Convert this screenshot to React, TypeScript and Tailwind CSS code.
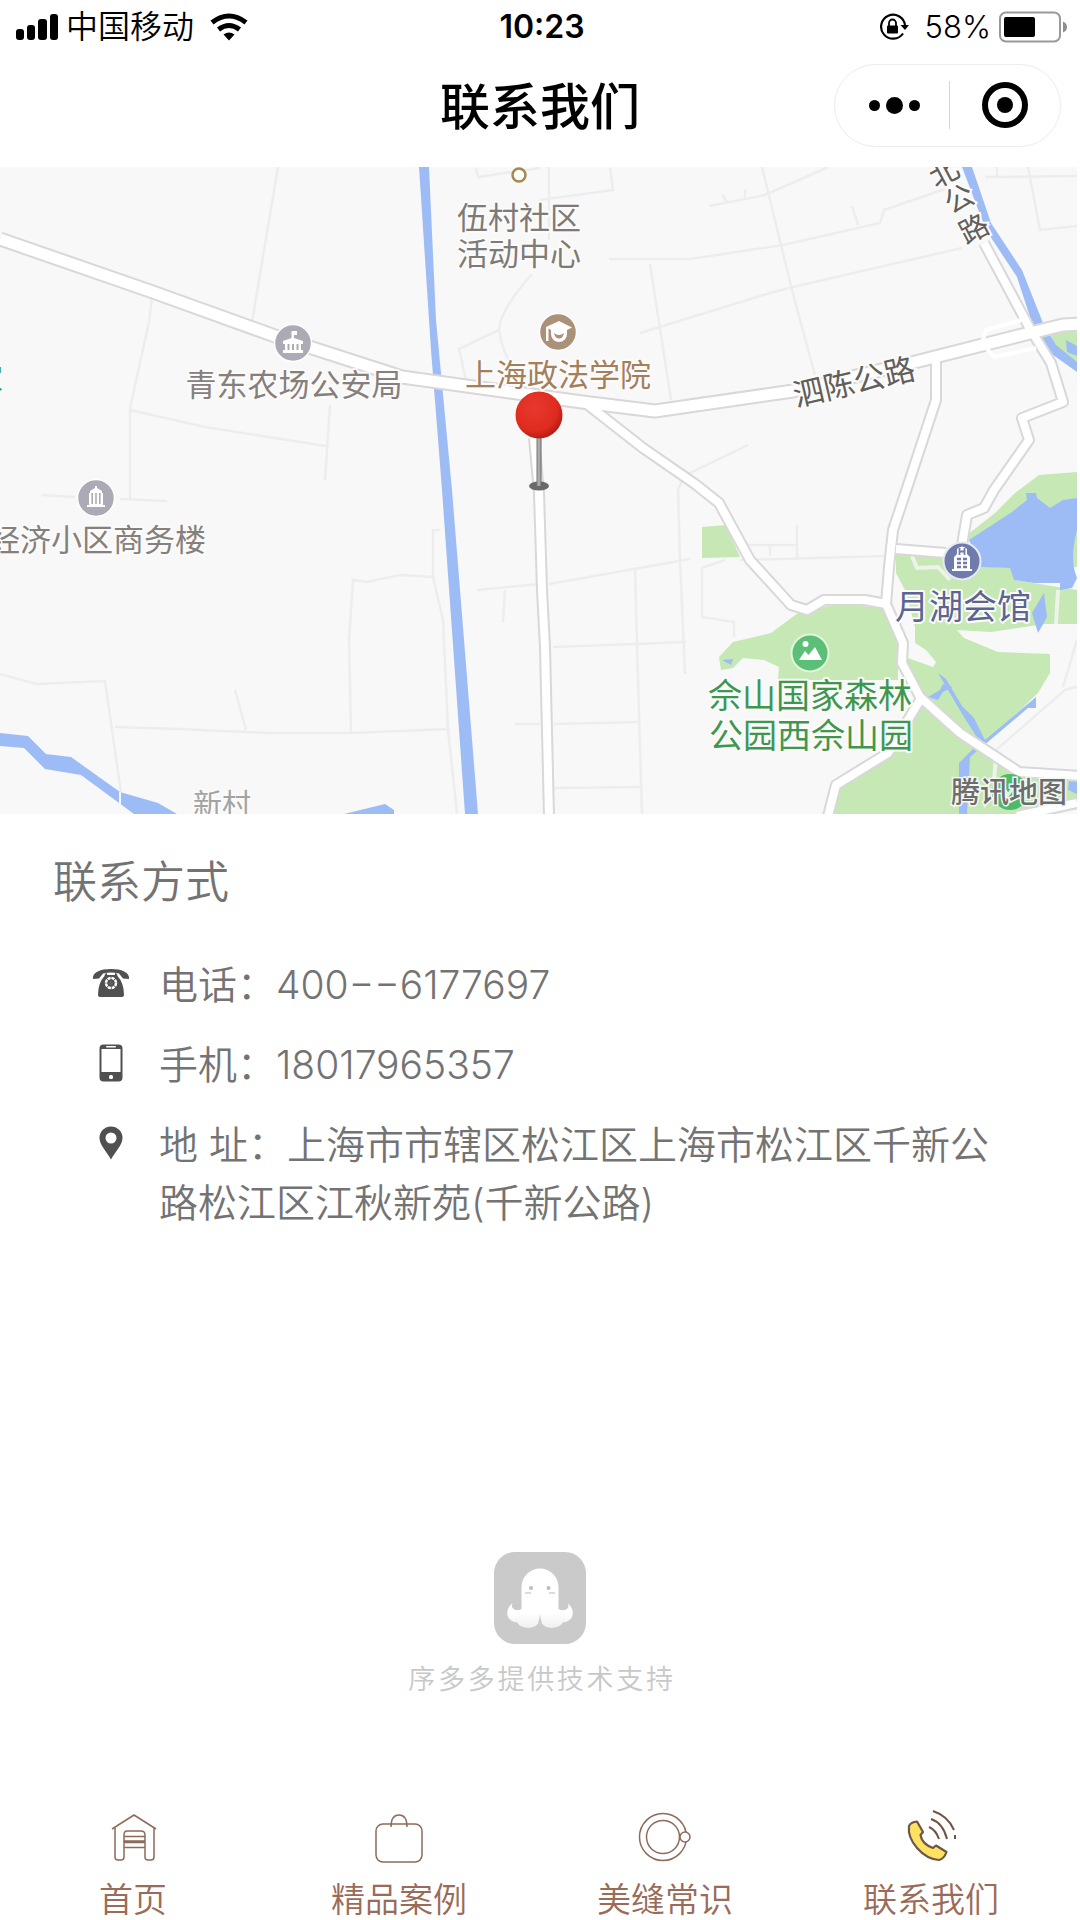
import { useState } from 'react'

const roads = [
    'M0 239 L150 291 L275 336 L402 377 L510 392 L582 402 L655 411 L793 391 L915 362 L1034 332 L1063 325 L1080 324',
    'M936 360 V400 L908 485 L893 530 L889 567 L886 604',
    'M984 243 L1029 327 L1051 363 L1063 402 L1022 418 L1029 440 L994 490 L984 508 L967 515 L962 545',
    'M588 405 L643 448 L695 484 L719 503 L750 560 L791 605 L807 610 L824 600 H865 L886 604 L903 643 L902 663 L920 697 L960 733 L1019 772 L1080 776',
    'M920 700 L908 720 L888 753 L836 785 L828 816',
    'M896 549 L946 553',
    'M534 438 L539 493 L542 590 L545 647 L549 816',
    'M1077 803 L1017 816',
]

const lanes = [
    'M278 167 L252 322', 'M152 298 L149 322 L130 408 V500', 'M130 410 L205 427 L326 446 M330 405 L325 480',
    'M42 495 L75 497 M120 499 L167 501', 'M0 674 L36 684 L105 681 L122 800 M115 727 L180 729 L270 733 H350 L450 729',
    'M235 690 L246 730', 'M351 732 L349 640 L353 580 L367 582 L400 575 L433 577 V530 H440 M433 577 L443 620 L448 730 L457 814',
    'M476 168 L478 177 L540 168 M549 167 V240 M540 200 L613 190 L610 168',
    'M532 274 Q500 310 499 330 L459 349 L466 380 M499 330 Q502 350 510 362',
    'M609 259 H690 L783 245 L880 223 L884 210 L945 189 M762 167 L792 290 L815 375',
    'M709 206 L765 195 L828 167 M722 195 L727 202 M745 189 V198',
    'M640 333 L770 293 L793 287 L962 248 M650 264 L671 400', 'M852 206 L858 225',
    'M985 177 L1077 176 M1028 167 L1040 230 L1077 226 M997 167 V177',
    'M748 445 L684 476 L678 490 L680 560 L685 674', 'M549 584 L634 569 L690 559 M635 570 L637 645 L642 814',
    'M553 647 L636 644 L686 642 M554 724 L640 722 M554 788 L641 787',
    'M477 590 L540 584 M505 590 L503 622 M515 724 H540', 'M748 545 H797 M797 525 V560 M770 546 V556 M740 560 L886 556',
    'M725 560 L702 568 V617 L734 622 V637', 'M988 757 L1065 690 L1077 687 M1063 687 L1077 640',
]

const labels = [
    { text: '青东农场公安局', x: 294, y: 396, size: 31, fill: '#85807d', anchor: 'middle' },
    { text: '伍村社区', x: 519, y: 229, size: 31, fill: '#7d7a77', anchor: 'middle' },
    { text: '活动中心', x: 519, y: 265, size: 31, fill: '#7d7a77', anchor: 'middle' },
    { text: '上海政法学院', x: 558, y: 386, size: 31, fill: '#a37f5c', anchor: 'middle' },
    { text: '经济小区商务楼', x: 206, y: 551, size: 31, fill: '#85807d', anchor: 'end' },
    { text: '新村', x: 222, y: 815, size: 29, fill: '#a3a3a3', anchor: 'middle' },
    { text: '月湖会馆', x: 963, y: 619, size: 34, fill: '#5c6491', anchor: 'middle' },
    { text: '佘山国家森林', x: 810, y: 708, size: 34, fill: '#3f974f', anchor: 'middle' },
    { text: '公园西佘山园', x: 811, y: 748, size: 34, fill: '#3f974f', anchor: 'middle' },
    { text: '家', x: 3, y: 389, size: 30, fill: '#3f974f', anchor: 'end' },
] as const

function MapView() {
    return (
        <svg viewBox="0 167 1077 647" className="block w-full font-[Noto_Sans_CJK_SC,sans-serif]" role="img" aria-label="地图">
            <defs>
                <radialGradient id="pin" cx="0.4" cy="0.35" r="0.65">
                    <stop offset="0" stopColor="#e8392e" />
                    <stop offset="0.75" stopColor="#df2b20" />
                    <stop offset="1" stopColor="#b91d14" />
                </radialGradient>
                <linearGradient id="stem">
                    <stop offset="0" stopColor="#777" />
                    <stop offset="0.5" stopColor="#bbb" />
                    <stop offset="1" stopColor="#666" />
                </linearGradient>
            </defs>
            <rect y="167" width="1077" height="647" fill="#f8f8f8" />
            {lanes.map((d) => (
                <path key={d} d={d} fill="none" stroke="#ededed" strokeWidth="2.5" />
            ))}

            {/* parks */}
            <g fill="#c5e8b5">
                <path d="M1077 472 L1039 475 L1015 493 L995 513 L967 535 L981 567 H1077 Z" />
                <path d="M896 555 L950 556 L981 566 L1010 568 L1015 580 L1077 590 V624 H1045 L991 632 L957 630 L964 638 L998 652 L1050 654 V673 L1038 693 L988 740 L970 757 L922 702 L905 657 L933 667 L936 662 L926 650 L915 643 V627 L905 590 L896 573 Z" />
                <path d="M702 527 L726 525 L740 557 L702 558 Z" />
                <path d="M798 613 L833 605 L884 607 L898 640 V680 H778 L779 667 L764 660 L743 658 L733 668 L721 670 L719 657 L733 642 L771 633 Z" />
                <path d="M922 703 L988 757 L1019 776 L1077 781 V803 L1017 814 H834 L838 789 L890 756 L912 722 Z" />
                <path d="M1050 333 L1077 330 V362 L1057 350 Z" />
            </g>
            {/* water */}
            <g fill="#9dbcf6">
                <path d="M419 167 H429 L436 320 L452 490 L478 814 H465 L442 490 L431 350 Z" />
                <path d="M0 733 L28 736 L46 754 L71 757 L120 792 L158 803 L177 814 H134 L81 775 L45 769 L24 748 L0 746 Z" />
                <path d="M344 814 L385 804 L394 810 V814 Z" />
                <path d="M962 167 H972 L991 223 L1022 270 L1043 323 L1056 345 L1077 362 V372 L1046 350 L1032 323 L1017 277 L986 230 Z" />
                <path d="M1066 340 L1077 346 V356 L1067 352 Z" />
                <path d="M1026 493 L1036 493 L1037 498 L1050 508 L1063 500 L1077 498 V530 Q1069 560 1077 578 L1072 588 L1060 590 V583 L1034 583 L1014 580 L1010 568 L981 567 L969 540 L1012 512 L1027 500 Z" />
                <path d="M1044 593 L1032 613 L1038 633 L1047 617 Z" />
                <path d="M938 673 L946 679 L962 706 L974 718 L985 740 L1036 697 V708 H1028 L970 757 L967 814 H959 V763 L980 742 L964 717 Z" />
                <path d="M928 697 L940 690 L943 684 L953 687 L943 692 L938 700 Z" />
                <path d="M722 660 L733 659 L731 665 Z" />
                <path d="M1069 781 H1077 V794 L1068 790 Z" />
            </g>
            <path d="M120 792 L120 806" stroke="#f8f8f8" strokeWidth="2" />
            <path d="M912 556 L917 568 L938 567 L950 580 M1058 590 L1056 624 M996 755 L994 782" fill="none" stroke="#eef3ea" strokeWidth="4" />

            <g fill="none" stroke="#d9d7d9" strokeLinejoin="round">
                {roads.map((d, i) => (
                    <path key={d} d={d} strokeWidth={i === 0 ? 15 : 12} />
                ))}
            </g>
            <g fill="none" stroke="#fff" strokeLinejoin="round">
                {roads.map((d, i) => (
                    <path key={d} d={d} strokeWidth={i === 0 ? 11 : 8} />
                ))}
                <path d="M1022 320 L986 330 L982 343 L994 357 L1036 348" strokeWidth="4" />
            </g>

            {labels.map((l) => (
                <text
                    key={l.text}
                    x={l.x}
                    y={l.y}
                    fontSize={l.size}
                    fill={l.fill}
                    textAnchor={l.anchor}
                    stroke="#fbfbf9"
                    strokeWidth="4"
                    paintOrder="stroke"
                    strokeLinejoin="round"
                >
                    {l.text}
                </text>
            ))}
            <g fill="#625e5b" stroke="#fbfbf9" strokeWidth="4" paintOrder="stroke" textAnchor="middle">
                <text transform="translate(854 382) rotate(-13)" y="11" fontSize="31">泗陈公路</text>
                <g fontSize="29">
                    <text transform="translate(944 173) rotate(-28)" y="10">北</text>
                    <text transform="translate(959 199) rotate(-28)" y="10">公</text>
                    <text transform="translate(974 229) rotate(-28)" y="10">路</text>
                </g>
            </g>

            <circle cx="519" cy="175" r="6.5" fill="#fff" stroke="#a18a4e" strokeWidth="2.5" />
            {/* police station */}
            <g transform="translate(293 343)">
                <circle r="18.5" fill="#acabb5" stroke="#fff" strokeWidth="1.5" />
                <path d="M-1.5 -12 H4 V-8 H1 V-5 L10 -2 V1 H8 V7 H10 V10 H-10 V7 H-8 V1 H-10 V-2 L-1.5 -5 Z" fill="#fff" />
                <path d="M-4.5 1 V7 M0 1 V7 M4.5 1 V7" stroke="#acabb5" strokeWidth="2" />
            </g>
            {/* office */}
            <g transform="translate(96 498)">
                <circle r="18.5" fill="#acabb5" stroke="#fff" strokeWidth="1.5" />
                <path d="M-1 -12 H1 V-10 L6 -7 V-5 H7 V7 H9 V9 H-9 V7 H-7 V-5 H-6 V-7 L-1 -10 Z" fill="#fff" />
                <path d="M-3.8 -5 V6 M0 -5 V6 M3.8 -5 V6" stroke="#acabb5" strokeWidth="1.6" />
            </g>
            {/* school */}
            <g transform="translate(558 332)">
                <circle r="18.5" fill="#ac9179" stroke="#fff" strokeWidth="1.5" />
                <path d="M1 -11 L14 -4.5 L9 -2 V2 A8 8 0 0 1 -7 2 V-2 L-9.5 -3.5 V9 H-12 V-5 Z" fill="#fff" />
                <path d="M-4 1 Q1 5 6 1 Q5 6.5 1 6.5 Q-3 6.5 -4 1 Z" fill="#ac9179" />
            </g>
            {/* hotel */}
            <g transform="translate(962 561)">
                <circle r="18.5" fill="#6f7bad" stroke="#e6eaf2" strokeWidth="2" />
                <path d="M-10 10 V8 H-8 V-4 L-5 -7 V-12 Q0 -17 5 -12 V-7 L8 -4 V8 H10 V10 Z" fill="#fff" />
                <path d="M-2.5 -13 V-6 M2.5 -13 V-6 M-2.5 -9.5 H2.5" stroke="#6f7bad" strokeWidth="1.8" fill="none" />
                <path d="M-5 -2 H-1 M1 -2 H5 M-5 2 H-1 M1 2 H5 M-5 6 H-1 M1 6 H5" stroke="#6f7bad" strokeWidth="2.4" />
            </g>
            {/* forest park */}
            <g transform="translate(810 653)">
                <circle r="18.5" fill="#5cbf78" stroke="#e2f4d9" strokeWidth="2" />
                <circle cx="-4.5" cy="-9" r="3" fill="#fff" />
                <path d="M-11 7 L-5 -2 L-1.5 2 L5 -6 L12 7 Z" fill="#fff" />
            </g>
            <circle cx="1010" cy="792" r="18" fill="#4dba6b" />
            <path d="M1002 785 L1008 795 L1016 784" stroke="#e2f4d9" strokeWidth="3" fill="none" />
            <text x="1009" y="803" fontSize="29" fontWeight="500" fill="#6d6d6d" stroke="#f4f8f2" strokeWidth="3" paintOrder="stroke" textAnchor="middle">
                腾讯地图
            </text>

            {/* location pin */}
            <ellipse cx="539" cy="486" rx="10" ry="4.5" fill="#6a6a6a" />
            <rect x="536.5" y="430" width="5" height="56" fill="url(#stem)" />
            <circle cx="539" cy="415" r="23.5" fill="url(#pin)" />
        </svg>
    )
}

function StatusBar() {
    return (
        <div className="grid h-[54px] grid-cols-3 items-center pl-4 pr-3 text-[32px] leading-[40px]">
            <div className="flex items-center gap-2">
                <svg width="42" height="28" viewBox="0 0 42 28" aria-hidden="true">
                    <rect x="0" y="16" width="8" height="11" rx="3" />
                    <rect x="11" y="12" width="8" height="15" rx="3" />
                    <rect x="22" y="6" width="9" height="21" rx="3" />
                    <rect x="34" y="1" width="8" height="26" rx="3" />
                </svg>
                <span className="font-[350]">中国移动</span>
                <svg className="ml-2" width="38" height="28" viewBox="0 0 38 28" aria-hidden="true">
                    <g fill="none" stroke="#000" strokeWidth="5">
                        <path d="M2 9.5 Q19 -3.5 36 9.5" />
                        <path d="M8.5 16.5 Q19 8.5 29.5 16.5" />
                    </g>
                    <path d="M13.5 21.5 Q19 17.5 24.5 21.5 L19 27.5 Z" />
                </svg>
            </div>
            <span className="text-center font-semibold">10:23</span>
            <div className="flex items-center justify-end gap-2">
                <svg className="mr-2" width="30" height="30" viewBox="0 0 30 30" aria-hidden="true">
                    <path d="M24 21.5 A12 12 0 1 1 26 13" fill="none" stroke="#000" strokeWidth="2.2" />
                    <path d="M21.5 13 H30 L26 18 Z" />
                    <rect x="8" y="13.5" width="11" height="8" rx="1" />
                    <path d="M10 14 V11 A3.5 3.5 0 0 1 17 11 V14" fill="none" stroke="#000" strokeWidth="1.8" />
                </svg>
                <span className="text-[31px] font-[350]">58%</span>
                <svg width="69" height="32" viewBox="0 0 69 32" aria-hidden="true">
                    <rect x="1" y="1.5" width="60" height="29" rx="6" fill="#fff" stroke="#999" strokeWidth="2" />
                    <rect x="5" y="6" width="31" height="20" rx="2" />
                    <path d="M64 10.5 Q68 12 68 16 Q68 20 64 21.5 Z" fill="#8f8f8f" />
                </svg>
            </div>
        </div>
    )
}

function TitleBar() {
    return (
        <div className="grid grid-cols-3 items-center pb-5 pt-[9px]">
            <h1 className="col-start-2 pt-1 text-center text-[50px] font-medium leading-[80px]">联系我们</h1>
            <div className="mr-[19px] flex h-[83px] w-[227px] items-center justify-self-end rounded-full border border-[#ececec]">
                <button aria-label="更多" className="flex h-12 flex-1 items-center justify-center gap-[6px] border-r border-[#d4d4d4] pl-1">
                    <span className="size-[11px] rounded-full bg-black" />
                    <span className="size-[17px] rounded-full bg-black" />
                    <span className="size-[11px] rounded-full bg-black" />
                </button>
                <button aria-label="关闭" className="flex h-12 flex-1 items-center justify-center">
                    <span className="flex size-[46px] items-center justify-center rounded-full border-[6px] border-black">
                        <span className="size-4 rounded-full bg-black" />
                    </span>
                </button>
            </div>
        </div>
    )
}

const PhoneIcon = () => (
    <svg width="38" height="30" viewBox="0 0 38 30" fill="#505050">
        <path d="M1 11 C0 4 9 1 19 1 S38 4 37 11 L31 10.5 L27 5.5 Q19 3.5 11 5.5 L7 10.5 Z" />
        <path d="M12.5 8 Q13 5 15 5 V7 H23 V5 Q25 5 25.5 8 Q32 15 32 27 Q32 29 30 29 H8 Q6 29 6 27 Q6 15 12.5 8 Z" />
        <circle cx="19" cy="15" r="5" fill="none" stroke="#fff" strokeWidth="2.5" strokeDasharray="3.1 0.8" />
        <circle cx="19" cy="15" r="2" fill="#606060" />
    </svg>
)

const MobileIcon = () => (
    <svg width="24" height="38" viewBox="0 0 24 38">
        <rect x="0.5" y="0.5" width="23" height="37" rx="4" fill="#505050" />
        <rect x="2.5" y="5" width="19" height="23" fill="#fff" />
        <rect x="7" y="2" width="10" height="1.5" rx="0.7" fill="#fff" />
        <rect x="10" y="31" width="4" height="4" rx="1.5" fill="#fff" />
    </svg>
)

const PlaceIcon = () => (
    <svg width="24" height="34" viewBox="0 0 24 34">
        <path d="M12 0.5 A11.5 11.5 0 0 1 23.5 12 C23.5 19 16 26 12 33.5 C8 26 0.5 19 0.5 12 A11.5 11.5 0 0 1 12 0.5 Z M12 6.5 A5.5 5.5 0 1 0 12 17.5 A5.5 5.5 0 1 0 12 6.5 Z" fill="#505050" fillRule="evenodd" />
    </svg>
)

const contacts = [
    { icon: <PhoneIcon />, text: '电话：400−−6177697' },
    { icon: <MobileIcon />, text: '手机：18017965357' },
    { icon: <PlaceIcon />, text: '地 址：上海市市辖区松江区上海市松江区千新公路松江区江秋新苑(千新公路)' },
]

const tabs = [
    {
        name: '首页',
        icon: (
            <path d="M5 17 L27 3 L49 17 M8 16 V45 Q8 48 11 48 H14 Q17 48 17 45 V23 Q17 19 20 19 H34 Q38 19 38 23 V45 Q38 48 41 48 H44 Q47 48 47 45 V16 M17 24.5 H38 M17 29 H38 M17 30.5 H38 M17 35.5 H38" />
        ),
    },
    {
        name: '精品案例',
        icon: (
            <>
                <rect x="3" y="12" width="46" height="38" rx="7" />
                <path d="M18 15 Q18 3 26 3 T34 15" />
            </>
        ),
    },
    {
        name: '美缝常识',
        icon: (
            <>
                <circle cx="24" cy="25" r="23.5" />
                <circle cx="24" cy="25" r="16.5" />
                <circle cx="46" cy="25" r="5" fill="#fff" />
            </>
        ),
    },
    {
        name: '联系我们',
        icon: (
            <>
                <path d="M4 14 Q6 10 12 9.5 L18 20 L15.5 23 Q17 32 28 36 L31 33.5 L41.5 40 Q39 47 34 48 C18 47 2 29 4 14 Z" fill="#fbe262" stroke="#6f5546" strokeWidth="2.2" />
                <path d="M24 15 Q31 18 34 27 M26 7 Q38 11 42 27 M28 -1 Q43 4 49 18 M50 23 V27" stroke="#6f5546" strokeWidth="2" />
            </>
        ),
    },
]

export default function App() {
    const [active, setActive] = useState('联系我们')

    return (
        <div className="flex min-h-screen flex-col bg-white font-[Inter,Noto_Sans_CJK_SC,sans-serif] text-black">
            <header>
                <StatusBar />
                <TitleBar />
            </header>

            <main className="flex flex-1 flex-col">
                <div className="mr-[3px]">
                    <MapView />
                </div>

                <section className="px-[53px] pt-9 text-[#737373]">
                    <h2 className="text-[44px] font-[350] leading-[64px]">联系方式</h2>
                    <ul className="mt-[42px] space-y-[22px] pl-[38px]">
                        {contacts.map((c) => (
                            <li key={c.text} className="flex gap-7 text-[39px] font-[350] leading-[58px]">
                                <span className="flex h-[54px] w-[40px] shrink-0 items-center justify-center">{c.icon}</span>
                                <p>{c.text}</p>
                            </li>
                        ))}
                    </ul>
                </section>

                <div className="mt-auto flex flex-col items-center gap-4 pb-28">
                    <svg width="92" height="92" viewBox="0 0 92 92" aria-hidden="true">
                        <defs>
                            <linearGradient id="legs" x1="0" y1="0" x2="0" y2="1">
                                <stop offset="0.75" stopColor="#fff" />
                                <stop offset="1" stopColor="#efefef" />
                            </linearGradient>
                        </defs>
                        <rect width="92" height="92" rx="21" fill="#cacaca" />
                        <path
                            d="M27.5 35 A18.5 18.5 0 0 1 64.5 35 V57 Q70 60 74 56 Q75 53 73.5 51 C80 56 81 65 74 69 Q70 71 69 70 C66 77 51 79 46 69 C41 79 26 77 23 70 Q22 71 18 69 C11 65 12 56 19 51 Q17 53 18.5 56 Q22 60 27.5 57 Z"
                            fill="url(#legs)"
                        />
                        <path d="M46 62 Q46.5 68 48 71 H44 Q45.5 68 46 62 Z" fill="#cacaca" />
                        <circle cx="37" cy="36" r="2" fill="#bdbdbd" />
                        <circle cx="54.5" cy="36" r="2" fill="#bdbdbd" />
                        <path d="M31 41 H37 M55 41 H61" stroke="#dcdcdc" strokeWidth="2" />
                    </svg>
                    <p className="pl-1 text-[27px] font-[350] leading-[40px] tracking-widest text-[#c8c8c8]">序多多提供技术支持</p>
                </div>
            </main>

            <nav className="grid grid-cols-4 pr-4">
                {tabs.map((t) => (
                    <button
                        key={t.name}
                        onClick={() => setActive(t.name)}
                        aria-current={active === t.name ? 'page' : undefined}
                        className="flex flex-col items-center gap-4 text-[34px] font-[350] leading-[40px] text-[#9a6b58]"
                    >
                        <svg className="overflow-visible" width="52" height="52" viewBox="0 0 52 52" fill="none" stroke="#8d6b5a" strokeWidth="1.5" strokeLinejoin="round" aria-hidden="true">
                            {t.icon}
                        </svg>
                        <span>{t.name}</span>
                    </button>
                ))}
            </nav>
        </div>
    )
}
